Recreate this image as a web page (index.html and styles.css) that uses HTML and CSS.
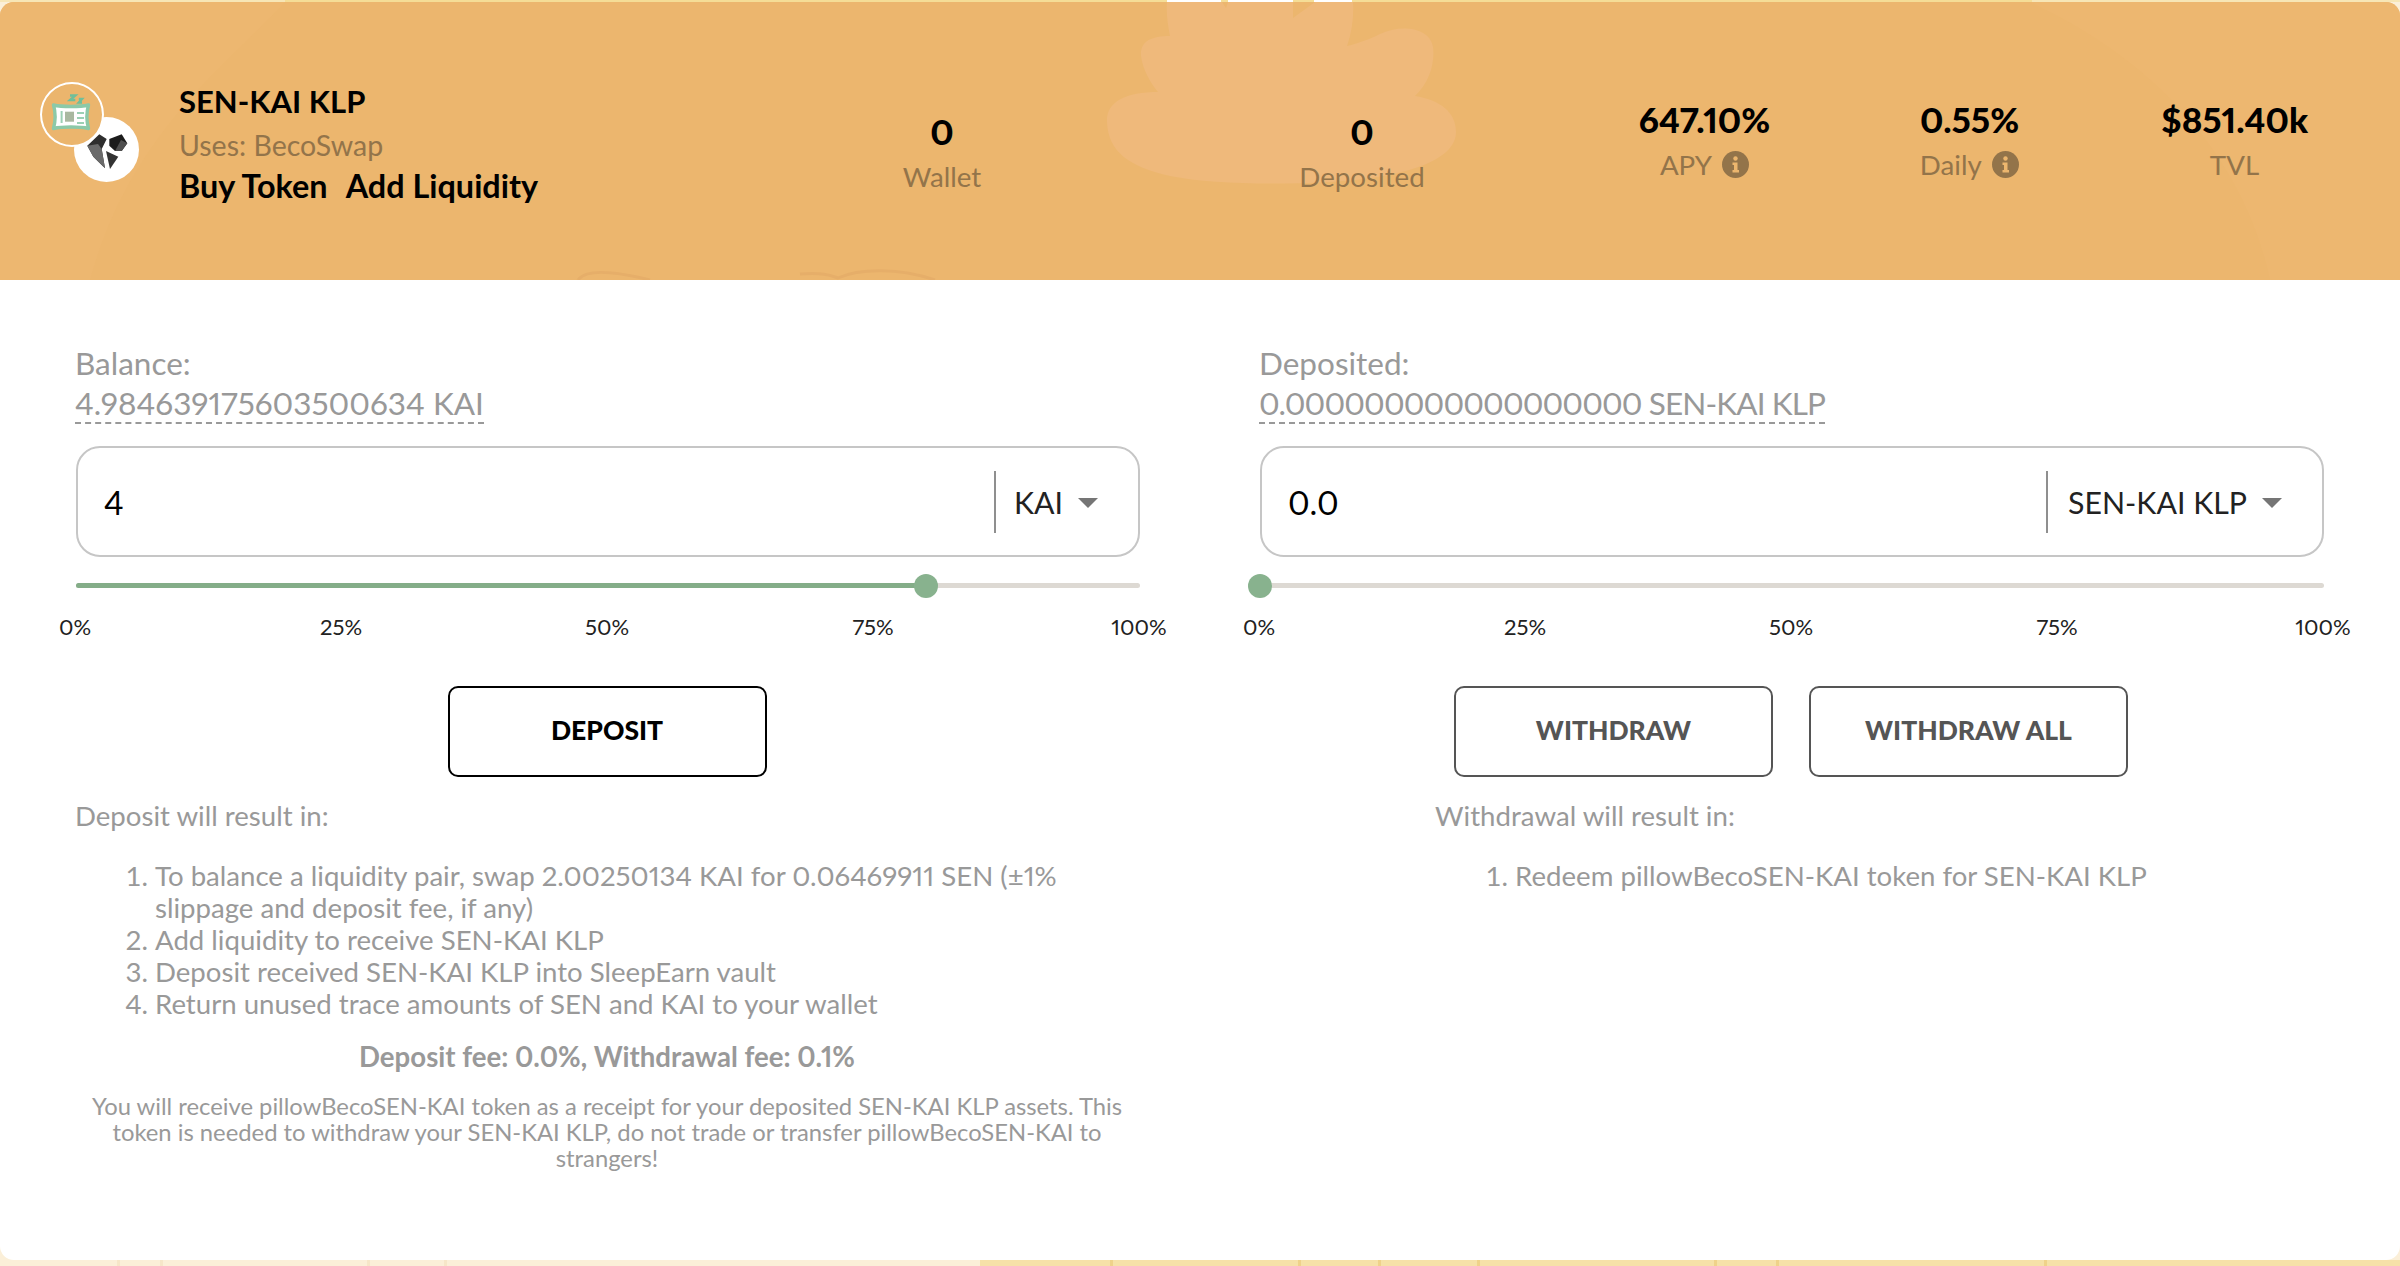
FILE: index.html
```html
<!DOCTYPE html>
<html lang="en">
<head>
<meta charset="utf-8">
<title>SEN-KAI KLP</title>
<link rel="stylesheet" href="styles.css">
</head>
<body>
<main class="card">
  <header class="head">
    <svg class="decor" viewBox="0 0 2400 278" width="2400" height="278" aria-hidden="true">
      <path class="decor-soft" d="M0 0H285C230 60 130 130 90 278H0Z"/>
      <path class="decor-soft" d="M2030 0H2400V278H2270C2250 180 2180 70 2030 0Z"/>
      <path class="decor-blob" d="M1167 0C1166 12 1168 24 1170 34C1150 34 1140 40 1141 54C1143 68 1150 80 1158 90C1125 90 1106 100 1107 120C1108 150 1130 165 1170 174C1210 182 1270 183 1330 180C1400 176 1456 160 1456 130C1456 110 1440 98 1415 94C1430 80 1435 60 1433 45C1430 25 1400 22 1380 32C1368 38 1355 42 1347 44C1352 30 1354 14 1353 0H1315L1293 16V0H1228L1226 6L1222 0Z"/>
      <path class="decor-line" d="M578 278C585 268 610 268 650 278M800 272C825 270 832 274 838 276C860 266 900 266 935 278"/>
    </svg>
    <div class="vault">
      <div class="logos">
        <span class="logo logo-kai">
          <svg viewBox="0 0 65 65" width="65" height="65" aria-hidden="true">
            <path fill="#2e2e2e" d="M13.3 28.7L25.3 17.3L32.7 22L27.7 32L31 51.3L19.3 39.7Z"/>
            <path fill="#6a6a6a" d="M13.3 28.7L24 27L27.7 32L31 51.3L19.3 39.7Z"/>
            <path fill="#1c1c1c" d="M35.3 22L47.7 17.3L53.3 26.3L47.7 34H41L35.3 28.7Z"/>
            <path fill="#4f4f4f" d="M41 34L47 23L53.3 26.3L47.7 34Z"/>
            <path fill="#333" d="M32 34L44.3 39.7L36 52Z"/>
          </svg>
        </span>
        <span class="logo logo-pillow">
          <svg viewBox="0 0 60 60" width="60" height="60" aria-hidden="true">
            <path class="zz" d="M28 11.5H33.3L28 16H33.3M36.8 15H40L36.8 18.5H40"/>
            <path class="pillow" d="M11.5 21C20 23 38 23 46.5 21C44.5 28 44.5 37 46.5 44.5C38 42.5 20 42.5 11.5 44.5C13.5 37 13.5 28 11.5 21Z"/>
            <rect class="pillow-patch" x="23" y="27.7" width="9" height="10"/>
            <path class="pillow-lines" d="M35 29H42M35 34H42M35 39H42M19.6 27V39"/>
          </svg>
        </span>
      </div>
      <div class="vault-text">
        <h1 class="vault-name">SEN-KAI KLP</h1>
        <p class="vault-uses">Uses: BecoSwap</p>
        <p class="vault-links"><a>Buy Token</a><a>Add Liquidity</a></p>
      </div>
    </div>
    <div class="stat stat-low"><strong>0</strong><span>Wallet</span></div>
    <div class="stat stat-low"><strong>0</strong><span>Deposited</span></div>
    <div class="stat"><strong>647.10%</strong><span>APY <svg class="info" viewBox="0 0 27 27" width="27" height="27" aria-hidden="true"><circle cx="13.5" cy="13.5" r="13.5"/><circle class="info-i" cx="13.5" cy="7.5" r="2.2"/><path class="info-i" d="M10.5 11.5H15.5V19H17V21.5H10.5V19H12V14H10.5Z"/></svg></span></div>
    <div class="stat"><strong>0.55%</strong><span>Daily <svg class="info" viewBox="0 0 27 27" width="27" height="27" aria-hidden="true"><circle cx="13.5" cy="13.5" r="13.5"/><circle class="info-i" cx="13.5" cy="7.5" r="2.2"/><path class="info-i" d="M10.5 11.5H15.5V19H17V21.5H10.5V19H12V14H10.5Z"/></svg></span></div>
    <div class="stat"><strong>$851.40k</strong><span>TVL</span></div>
  </header>

  <div class="panels">
    <section class="panel">
      <p class="bal-label">Balance:</p>
      <p class="bal-row"><span class="bal-value">4.984639175603500634 KAI</span></p>
      <div class="field">
        <div class="field-value">4</div>
        <div class="field-token"><span>KAI</span><i class="caret"></i></div>
      </div>
      <div class="slider">
        <div class="slider-fill" style="width:79.9%"></div>
        <div class="slider-thumb" style="left:79.9%"></div>
      </div>
      <div class="marks"><span>0%</span><span>25%</span><span>50%</span><span>75%</span><span>100%</span></div>
      <div class="actions"><button class="btn btn-active">DEPOSIT</button></div>
      <div class="notes">
        <p class="notes-title">Deposit will result in:</p>
        <ol class="steps">
          <li>To balance a liquidity pair, swap 2.00250134 KAI for 0.06469911 SEN (±1% slippage and deposit fee, if any)</li>
          <li>Add liquidity to receive SEN-KAI KLP</li>
          <li>Deposit received SEN-KAI KLP into SleepEarn vault</li>
          <li>Return unused trace amounts of SEN and KAI to your wallet</li>
        </ol>
      </div>
      <p class="fees">Deposit fee: 0.0%, Withdrawal fee: 0.1%</p>
      <p class="receipt">You will receive pillowBecoSEN-KAI token as a receipt for your deposited SEN-KAI KLP assets. This token is needed to withdraw your SEN-KAI KLP, do not trade or transfer pillowBecoSEN-KAI to strangers!</p>
    </section>

    <section class="panel">
      <p class="bal-label">Deposited:</p>
      <p class="bal-row"><span class="bal-value bal-value-tight">0.000000000000000000 SEN-KAI KLP</span></p>
      <div class="field">
        <div class="field-value">0.0</div>
        <div class="field-token field-token-wide"><span>SEN-KAI KLP</span><i class="caret"></i></div>
      </div>
      <div class="slider">
        <div class="slider-thumb" style="left:0%"></div>
      </div>
      <div class="marks"><span>0%</span><span>25%</span><span>50%</span><span>75%</span><span>100%</span></div>
      <div class="actions"><button class="btn">WITHDRAW</button><button class="btn">WITHDRAW ALL</button></div>
      <div class="notes notes-centered">
        <p class="notes-title">Withdrawal will result in:</p>
        <ol class="steps">
          <li>Redeem pillowBecoSEN-KAI token for SEN-KAI KLP</li>
        </ol>
      </div>
    </section>
  </div>
</main>
</body>
</html>
```

FILE: styles.css
```css
* { box-sizing: border-box; }

html, body {
  margin: 0;
  height: 1266px;
  overflow: hidden;
}

body {
  font-family: "Lato", "Liberation Sans", sans-serif;
  font-variant-numeric: proportional-nums;
  background-color: #fbefd8;
  background-image:
    linear-gradient(90deg,
      #f7e6b6 0, #f7e6b6 285px, #f5dd96 285px, #f5dd96 1167px, #fff 1167px, #fff 1221px,
      #f5dd96 1221px, #f5dd96 1228px, #fff 1228px, #fff 1293px, #f5dd96 1293px, #f5dd96 1314px,
      #fff 1314px, #fff 1352px, #f5dd96 1352px, #f5dd96 2032px, #f7e6b6 2032px),
    linear-gradient(90deg,
      #fbefd8 0, #fbefd8 117px, #f6e6c8 117px, #f6e6c8 120px, #fbefd8 120px, #fbefd8 160px,
      #f6e6c8 160px, #f6e6c8 163px, #fbefd8 163px, #fbefd8 367px, #f6e6c8 367px, #f6e6c8 370px,
      #fbefd8 370px, #fbefd8 444px, #f6e6c8 444px, #f6e6c8 447px, #fbefd8 447px, #fbefd8 980px,
      #f6e1a8 980px, #f6e1a8 1110px, #efd28a 1110px, #efd28a 1113px, #f6e1a8 1113px, #f6e1a8 1298px,
      #efd28a 1298px, #efd28a 1301px, #f6e1a8 1301px, #f6e1a8 1378px, #efd28a 1378px, #efd28a 1381px,
      #f6e1a8 1381px, #f6e1a8 1477px, #efd28a 1477px, #efd28a 1480px, #f6e1a8 1480px, #f6e1a8 1714px,
      #efd28a 1714px, #efd28a 1717px, #f6e1a8 1717px, #f6e1a8 1776px, #efd28a 1776px, #efd28a 1779px,
      #f6e1a8 1779px, #f6e1a8 2044px, #efd28a 2044px, #efd28a 2047px, #f6e1a8 2047px, #f6e1a8 2400px);
  background-size: 100% 2px, 100% 6px;
  background-position: 0 0, 0 100%;
  background-repeat: no-repeat;
}

p, h1, ol { margin: 0; }

.card {
  margin-top: 2px;
  height: 1258px;
  background: #fff;
  border-radius: 14px;
  overflow: hidden;
}

/* Header */
.head {
  position: relative;
  height: 278px;
  background: #ecb66e;
  display: grid;
  grid-template-columns: 732px 420px 420px 265px 265px 265px;
  align-items: start;
}

.decor {
  position: absolute;
  inset: 0;
}

.decor-soft { fill: #edb770; }
.decor-blob { fill: #efb97b; }
.decor-line { fill: none; stroke: #e6ae69; stroke-width: 3; }

.vault {
  position: relative;
  display: flex;
  padding: 80px 0 0 40px;
}

.logos {
  position: relative;
  width: 99px;
  height: 100px;
  margin-right: 40px;
}

.logo {
  position: absolute;
  border-radius: 50%;
  display: block;
}

.logo svg { display: block; }

.logo-kai {
  left: 34px;
  top: 35px;
  width: 65px;
  height: 65px;
  background: #fff;
}

.logo-pillow {
  left: 0;
  top: 0;
  width: 64px;
  height: 65px;
  background: #ebb56d;
  border: 2px solid #fff;
}

.zz { fill: none; stroke: #6fbf9a; stroke-width: 2.4; }
.pillow { fill: #fff; stroke: #8cc9a8; stroke-width: 3.4; stroke-linejoin: round; }
.pillow-patch { fill: #a9b8a0; }
.pillow-lines { fill: none; stroke: #9bd0b4; stroke-width: 2; }

.vault-name {
  font-size: 31px;
  line-height: 38px;
  font-weight: 700;
  color: #000;
}

.vault-uses {
  margin-top: 6px;
  font-size: 28.5px;
  line-height: 38px;
  color: #93744a;
}

.vault-links {
  display: flex;
  gap: 18px;
  margin-top: 3px;
  font-size: 32.4px;
  line-height: 38px;
  font-weight: 700;
  color: #000;
}

.stat {
  position: relative;
  display: flex;
  flex-direction: column;
  align-items: center;
  padding-top: 97px;
}

.stat-low { padding-top: 109px; }

.stat strong {
  font-size: 35px;
  line-height: 40px;
  font-weight: 900;
  color: #000;
}

.stat span {
  display: flex;
  align-items: center;
  gap: 4px;
  margin-top: 6px;
  font-size: 27.7px;
  line-height: 40px;
  color: #93744a;
  white-space: pre;
}

.info { fill: #93744a; margin-top: -2px; }
.info-i { fill: #ecb66e; }

/* Panels */
.panels {
  display: grid;
  grid-template-columns: 1064px 1064px;
  column-gap: 120px;
  padding: 66px 76px 0 75px;
}

.bal-label {
  font-size: 31.5px;
  line-height: 34px;
  color: #999;
}

.bal-row {
  margin-top: 6px;
  font-size: 31.5px;
  line-height: 34px;
  color: #999;
}

.bal-value {
  display: inline-block;
  padding-bottom: 2px;
  border-bottom: 2px dashed #999;
}

.bal-value-tight { letter-spacing: -0.9px; }

.field {
  display: flex;
  align-items: center;
  justify-content: space-between;
  width: 1064px;
  height: 111px;
  margin: 22px 0 0 1px;
  padding: 0 26px;
  border: 2px solid #c6c6c6;
  border-radius: 24px;
}

.field-value {
  font-size: 33px;
  color: #000;
}

.field-token {
  display: flex;
  align-items: center;
  width: 144px;
  height: 62px;
  margin-right: -26px;
  padding-left: 18px;
  border-left: 2px solid #8f8f8f;
  font-size: 30.3px;
  color: #222;
}

.field-token-wide { width: 276px; padding-left: 20px; }

.caret {
  width: 0;
  height: 0;
  margin: 3px 0 0 15px;
  border-left: 10px solid transparent;
  border-right: 10px solid transparent;
  border-top: 10px solid #757575;
}

.slider {
  position: relative;
  width: 1064px;
  height: 5px;
  margin: 26px 0 0 1px;
  background: #ddd9d3;
  border-radius: 3px;
}

.slider-fill {
  height: 100%;
  background: #84ad88;
  border-radius: 3px;
}

.slider-thumb {
  position: absolute;
  top: -9.5px;
  width: 24px;
  height: 24px;
  transform: translateX(-50%);
  background: #88b28e;
  border-radius: 50%;
}

.marks {
  display: flex;
  justify-content: space-between;
  width: 1064px;
  margin-top: 25px;
}

.marks span {
  display: flex;
  justify-content: center;
  width: 0;
  font-size: 22px;
  line-height: 28px;
  color: #222;
  white-space: nowrap;
}

.actions {
  display: flex;
  justify-content: center;
  gap: 36px;
  margin-top: 45px;
}

.btn {
  width: 319px;
  height: 91px;
  padding: 0 0 3px;
  background: #fff;
  border: 2px solid #555;
  border-radius: 10px;
  font-family: inherit;
  font-size: 26.5px;
  font-weight: 900;
  color: #555;
}

.btn-active {
  border-color: #000;
  color: #000;
}

.notes { color: #999; font-size: 27.6px; line-height: 32px; }

.notes-title { margin-top: 23px; }

.notes-centered {
  width: max-content;
  margin: 0 auto;
}

.steps {
  margin-top: 28px;
  padding-left: 80px;
}

.fees {
  margin-top: 21px;
  text-align: center;
  font-size: 27.6px;
  line-height: 32px;
  font-weight: 700;
  color: #999;
}

.receipt {
  margin-top: 20px;
  padding: 0 10px;
  text-align: center;
  font-size: 23.8px;
  line-height: 26px;
  color: #999;
}
```
